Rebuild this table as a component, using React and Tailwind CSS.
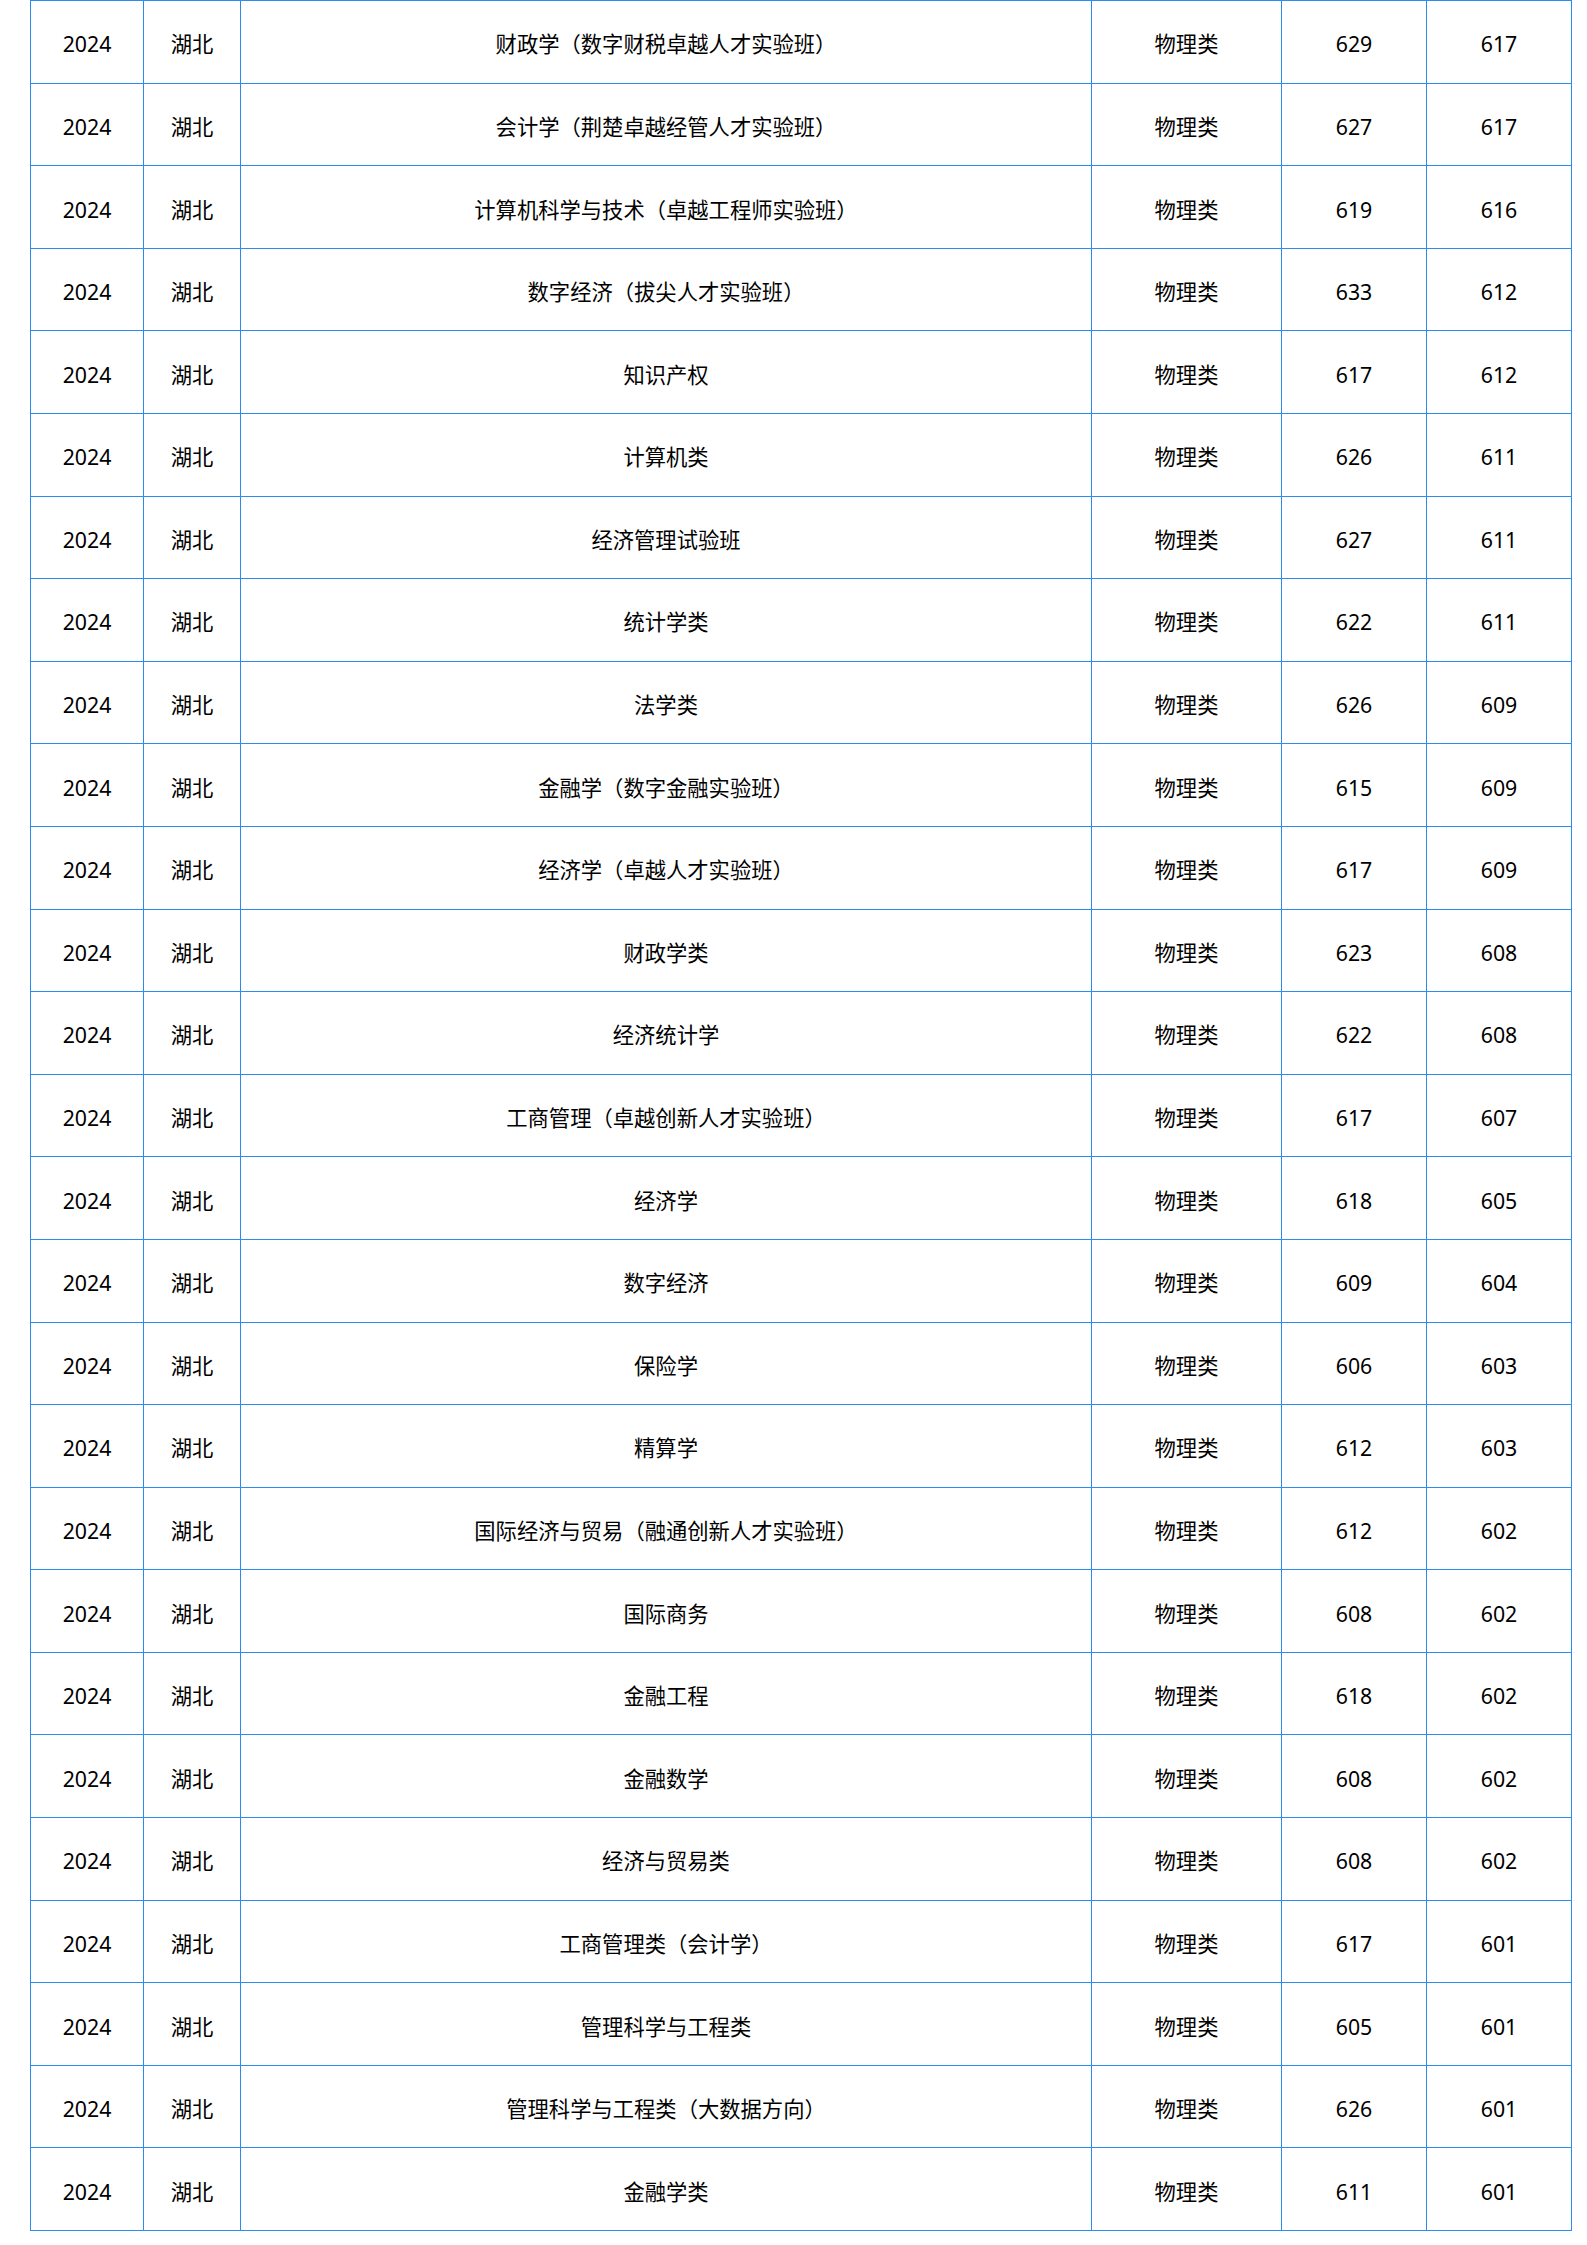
import React from "react";

const rows = [
  ["财政学（数字财税卓越人才实验班）", 629, 617],
  ["会计学（荆楚卓越经管人才实验班）", 627, 617],
  ["计算机科学与技术（卓越工程师实验班）", 619, 616],
  ["数字经济（拔尖人才实验班）", 633, 612],
  ["知识产权", 617, 612],
  ["计算机类", 626, 611],
  ["经济管理试验班", 627, 611],
  ["统计学类", 622, 611],
  ["法学类", 626, 609],
  ["金融学（数字金融实验班）", 615, 609],
  ["经济学（卓越人才实验班）", 617, 609],
  ["财政学类", 623, 608],
  ["经济统计学", 622, 608],
  ["工商管理（卓越创新人才实验班）", 617, 607],
  ["经济学", 618, 605],
  ["数字经济", 609, 604],
  ["保险学", 606, 603],
  ["精算学", 612, 603],
  ["国际经济与贸易（融通创新人才实验班）", 612, 602],
  ["国际商务", 608, 602],
  ["金融工程", 618, 602],
  ["金融数学", 608, 602],
  ["经济与贸易类", 608, 602],
  ["工商管理类（会计学）", 617, 601],
  ["管理科学与工程类", 605, 601],
  ["管理科学与工程类（大数据方向）", 626, 601],
  ["金融学类", 611, 601],
];

const cell = "border border-[#2b8cf0] text-center align-middle px-0 pt-[5px] pb-0";

export default function App() {
  return (
    <div className="bg-white min-h-screen pl-[30px] font-['Noto_Sans','Noto_Sans_CJK_SC',sans-serif] text-[21.3px] text-black">
      <table className="table-fixed border-collapse w-[1541px]">
        <colgroup>
          <col className="w-[113px]" />
          <col className="w-[97px]" />
          <col className="w-[851px]" />
          <col className="w-[190px]" />
          <col className="w-[145px]" />
          <col className="w-[145px]" />
        </colgroup>
        <tbody>
          {rows.map(([major, max, min], i) => (
            <tr key={i} className="h-[82.6px]">
              <td className={cell}>2024</td>
              <td className={cell}>湖北</td>
              <td className={cell}>{major}</td>
              <td className={cell}>物理类</td>
              <td className={cell}>{max}</td>
              <td className={cell}>{min}</td>
            </tr>
          ))}
        </tbody>
      </table>
    </div>
  );
}
